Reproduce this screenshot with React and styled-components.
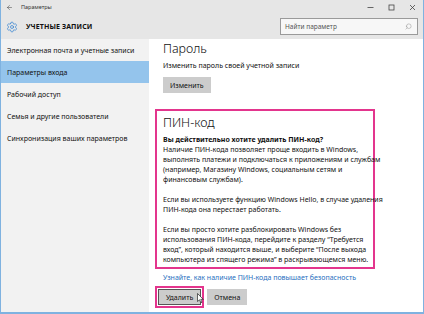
import React from "react";
import styled, { createGlobalStyle } from "styled-components";
import { Settings, ArrowLeft, Search } from "lucide-react";

const GlobalStyle = createGlobalStyle`
  html, body { margin: 0; padding: 0; background: #ffffff; }
  body { font-family: "Noto Sans", "Open Sans", sans-serif; color: #111; }
  * { box-sizing: border-box; }
`;

const Window = styled.div`
  width: 424px;
  height: 314px;
  display: flex;
  flex-direction: column;
  border-left: 1px solid #7fb2e0;
  border-right: 1px solid #7fb2e0;
  border-bottom: 2px solid #7fb2e0;
  background: #fff;
  overflow: hidden;
`;

const TitleBar = styled.div`
  height: 14px;
  background: #e6e6e6;
  display: flex;
  align-items: center;
  padding-left: 5px;
`;

const TitleText = styled.span`
  font-size: 5.5px;
  color: #333;
  margin-left: 8px;
  flex: 1;
`;

const Controls = styled.div`
  display: flex;
  align-items: center;
  gap: 0;
`;

const Ctrl = styled.div`
  width: 21px;
  height: 14px;
  display: flex;
  align-items: center;
  justify-content: center;
  color: #444;
`;

const Header = styled.div`
  height: 25px;
  background: #e6e6e6;
  display: flex;
  align-items: center;
  padding-left: 5px;
  padding-right: 5px;
`;

const HeaderTitle = styled.span`
  font-size: 7px;
  font-weight: 700;
  letter-spacing: 0.1px;
  margin-left: 8px;
  flex: 1;
  color: #111;
`;

const SearchBox = styled.div`
  width: 138px;
  height: 17px;
  border: 1.5px solid #9a9a9a;
  background: #f7f7f7;
  display: flex;
  align-items: center;
  padding: 0 5px 0 4px;
  font-size: 6.5px;
  color: #555;
`;

const Placeholder = styled.span`
  flex: 1;
`;

const Body = styled.div`
  flex: 1;
  display: flex;
  min-height: 0;
`;

const Sidebar = styled.div`
  width: 148px;
  background: #f2f2f2;
  padding-top: 0;
  display: flex;
  flex-direction: column;
`;

const NavItem = styled.div`
  height: 22px;
  display: flex;
  align-items: center;
  padding-left: 6px;
  font-size: 7px;
  color: #111;
  background: ${(p) => (p.$active ? "#94c4ec" : "transparent")};
`;

const Content = styled.div`
  flex: 1;
  padding-left: 6px;
  display: flex;
  flex-direction: column;
`;

const Section = styled.div`
  padding-left: 8px;
  display: flex;
  flex-direction: column;
  align-items: flex-start;
`;

const Heading = styled.div`
  font-size: 12.5px;
  line-height: 16px;
  font-weight: 300;
  color: #111;
  margin-top: ${(p) => p.$mt || 0}px;
`;

const Text = styled.div`
  font-size: 7px;
  line-height: 10px;
  margin-top: ${(p) => p.$mt || 0}px;
  color: #111;
  white-space: nowrap;
`;

const Button = styled.div`
  height: 16px;
  padding: 0 7px;
  background: #cccccc;
  font-size: 7px;
  display: flex;
  align-items: center;
  justify-content: center;
  color: #111;
  margin-top: ${(p) => p.$mt || 0}px;
  border: ${(p) => (p.$focused ? "1.5px solid #555" : "none")};
`;

const PinBox = styled.div`
  margin-top: 16px;
  width: 220px;
  border: 2px solid #e3358d;
  padding: 4px 6px 2px 6px;
`;

const Para = styled.p`
  margin: ${(p) => p.$mt || 0}px 0 0 0;
  font-size: 7px;
  line-height: 10px;
  white-space: nowrap;
  color: #111;
`;

const Bold = styled.span`
  font-weight: 700;
`;

const Link = styled.div`
  font-size: 7px;
  line-height: 10px;
  color: #1f6fc0;
  margin-top: 4px;
`;

const ButtonRow = styled.div`
  display: flex;
  align-items: center;
  gap: 3px;
  margin-top: 3px;
  margin-left: -8px;
`;

const FocusRing = styled.div`
  position: relative;
  border: 2px solid #e3358d;
  padding: 1px;
`;

const Cursor = styled.svg`
  position: absolute;
  left: 40px;
  top: 5px;
`;

export default function App() {
  return (
    <>
      <GlobalStyle />
      <Window>
        <TitleBar>
          <ArrowLeft size={7} strokeWidth={1.6} color="#333" />
          <TitleText>Параметры</TitleText>
          <Controls>
            <Ctrl>
              <svg width="7" height="7" viewBox="0 0 7 7">
                <line x1="0.5" y1="3.5" x2="6.5" y2="3.5" stroke="#444" strokeWidth="0.8" />
              </svg>
            </Ctrl>
            <Ctrl>
              <svg width="7" height="7" viewBox="0 0 7 7">
                <rect x="1" y="1" width="5" height="5" fill="none" stroke="#444" strokeWidth="0.8" />
              </svg>
            </Ctrl>
            <Ctrl>
              <svg width="7" height="7" viewBox="0 0 7 7">
                <line x1="1" y1="1" x2="6" y2="6" stroke="#444" strokeWidth="0.8" />
                <line x1="6" y1="1" x2="1" y2="6" stroke="#444" strokeWidth="0.8" />
              </svg>
            </Ctrl>
          </Controls>
        </TitleBar>
        <Header>
          <Settings size={12} strokeWidth={1.4} color="#2f7fd0" />
          <HeaderTitle>УЧЕТНЫЕ ЗАПИСИ</HeaderTitle>
          <SearchBox>
            <Placeholder>Найти параметр</Placeholder>
            <Search size={7} strokeWidth={1.5} color="#888" style={{ transform: "scaleX(-1)" }} />
          </SearchBox>
        </Header>
        <Body>
          <Sidebar>
            <NavItem>Электронная почта и учетные записи</NavItem>
            <NavItem $active>Параметры входа</NavItem>
            <NavItem>Рабочий доступ</NavItem>
            <NavItem>Семья и другие пользователи</NavItem>
            <NavItem>Синхронизация ваших параметров</NavItem>
          </Sidebar>
          <Content>
            <Section>
              <Heading $mt={2}>Пароль</Heading>
              <Text $mt={4}>Изменить пароль своей учетной записи</Text>
              <Button $mt={6}>Изменить</Button>
            </Section>
            <PinBox>
              <Heading>ПИН-код</Heading>
              <Para $mt={4}>
                <Bold>Вы действительно хотите удалить ПИН-код?</Bold>
                <br />
                Наличие ПИН-кода позволяет проще входить в Windows,
                <br />
                выполнять платежи и подключаться к приложениям и службам
                <br />
                (например, Магазину Windows, социальным сетям и
                <br />
                финансовым службам).
              </Para>
              <Para $mt={10}>
                Если вы используете функцию Windows Hello, в случае удаления
                <br />
                ПИН-кода она перестает работать.
              </Para>
              <Para $mt={10}>
                Если вы просто хотите разблокировать Windows без
                <br />
                использования ПИН-кода, перейдите к разделу “Требуется
                <br />
                вход”, который находится выше, и выберите “После выхода
                <br />
                компьютера из спящего режима” в раскрывающемся меню.
              </Para>
            </PinBox>
            <Section>
              <Link>Узнайте, как наличие ПИН-кода повышает безопасность</Link>
              <ButtonRow>
                <FocusRing>
                  <Button $focused>Удалить</Button>
                  <Cursor width="7" height="11" viewBox="0 0 7 11">
                    <path d="M0.5 0.5 L0.5 8.5 L2.5 6.8 L3.8 9.8 L5 9.3 L3.8 6.4 L6.3 6.4 Z" fill="#fff" stroke="#222" strokeWidth="0.7" />
                  </Cursor>
                </FocusRing>
                <Button>Отмена</Button>
              </ButtonRow>
            </Section>
          </Content>
        </Body>
      </Window>
    </>
  );
}
